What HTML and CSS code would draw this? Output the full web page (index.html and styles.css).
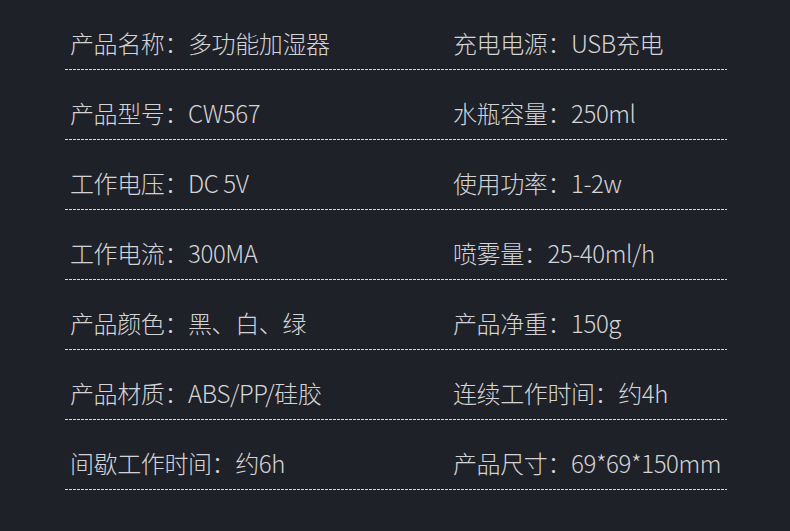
FILE: index.html
```html
<!DOCTYPE html>
<html lang="zh-CN">
<head>
<meta charset="utf-8">
<title>产品参数</title>
<link rel="stylesheet" href="styles.css">
</head>
<body>
<div class="specs">
  <div class="row"><div class="cell">产品名称：多功能加湿器</div><div class="cell">充电电源：USB充电</div></div>
  <div class="row"><div class="cell">产品型号：CW567</div><div class="cell">水瓶容量：250ml</div></div>
  <div class="row"><div class="cell">工作电压：DC 5V</div><div class="cell">使用功率：1-2w</div></div>
  <div class="row"><div class="cell">工作电流：300MA</div><div class="cell">喷雾量：25-40ml/h</div></div>
  <div class="row"><div class="cell">产品颜色：黑、白、绿</div><div class="cell">产品净重：150g</div></div>
  <div class="row"><div class="cell">产品材质：ABS/PP/硅胶</div><div class="cell">连续工作时间：约4h</div></div>
  <div class="row"><div class="cell">间歇工作时间：约6h</div><div class="cell">产品尺寸：69*69*150mm</div></div>
</div>
</body>
</html>
```
FILE: styles.css
```css
html, body {
  margin: 0;
  padding: 0;
  background: #1f2129;
}
body {
  width: 790px;
  height: 531px;
  overflow: hidden;
  font-family: "Noto Sans CJK SC", "Noto Sans", sans-serif;
  font-weight: 300;
  color: #d4d4d6;
}
.specs {
  margin-left: 65px;
  width: 662px;
  display: flex;
  flex-direction: column;
}
.row {
  display: grid;
  grid-template-columns: 383px 1fr;
  height: 70px;
  box-sizing: border-box;
  padding: 26px 0 10px;
  background: repeating-linear-gradient(to right, #d8d8d8 0 3px, transparent 3px 4px) left bottom / 100% 1px no-repeat;
}
.cell {
  padding-left: 5px;
  font-size: 24px;
  line-height: 34px;
  white-space: nowrap;
  letter-spacing: -0.4px;
}
```
